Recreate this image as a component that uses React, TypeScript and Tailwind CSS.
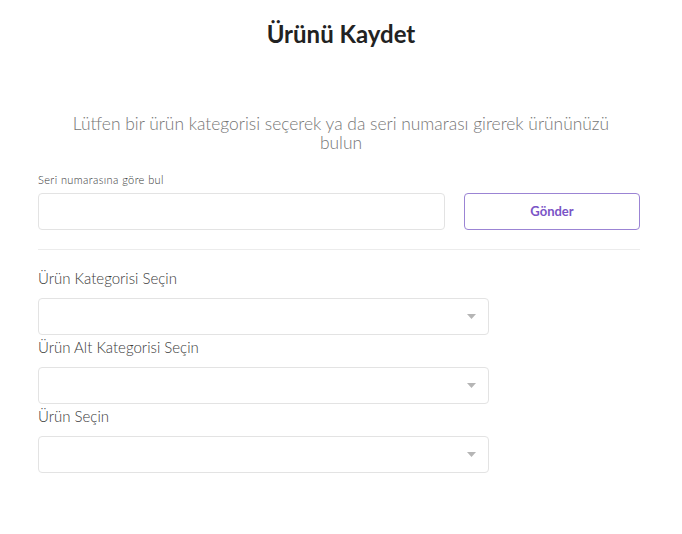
import React from 'react';

const font = { fontFamily: 'Lato, "Noto Sans", sans-serif' };

function SelectBox() {
  return (
    <div className="relative h-[37px] w-[451px] rounded border border-[#e3e3e3] bg-white">
      <svg className="absolute right-[12px] top-[15px]" width="9" height="6" viewBox="0 0 9 6">
        <path d="M0 0 L9 0 L4.5 5 Z" fill="#b5b5b5" />
      </svg>
    </div>
  );
}

function SelectField({ label }: { label: string }) {
  return (
    <div className="flex flex-col">
      <label className="text-[15px] leading-[20px] text-[#3a3a3a] font-light">{label}</label>
      <div className="mt-[10px]">
        <SelectBox />
      </div>
    </div>
  );
}

export default function App() {
  return (
    <div className="min-h-[534px] w-[682px] bg-white" style={font}>
      <div className="px-[38px] pt-[19px]">
        <h1 className="text-center text-[24px] leading-[30px] font-bold text-[#222]">Ürünü Kaydet</h1>
        <p className="mx-auto mt-[65px] w-[570px] text-center text-[17.4px] leading-[19px] font-light text-[#767676]">
          Lütfen bir ürün kategorisi seçerek ya da seri numarası girerek ürününüzü bulun
        </p>
        <div className="mt-[21px] text-[11px] leading-[14px] tracking-[0.4px] font-light text-[#333]">Seri numarasına göre bul</div>
        <div className="mt-[6px] flex gap-[19px]">
          <input className="h-[37px] w-[407px] rounded border border-[#e3e3e3] bg-white outline-none" />
          <button className="h-[37px] w-[176px] rounded border border-[#9b84d4] text-[13px] font-bold text-[#7a54c6]">
            Gönder
          </button>
        </div>
        <div className="mt-[19px] h-px w-[602px] bg-[#ececec]" />
        <div className="mt-[18px] flex flex-col gap-[2px]">
          <SelectField label="Ürün Kategorisi Seçin" />
          <SelectField label="Ürün Alt Kategorisi Seçin" />
          <SelectField label="Ürün Seçin" />
        </div>
      </div>
    </div>
  );
}
